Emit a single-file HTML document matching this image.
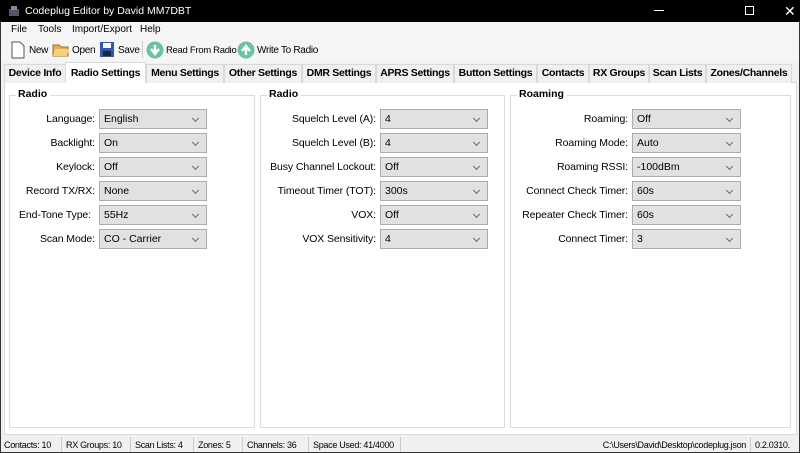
<!DOCTYPE html>
<html><head><meta charset="utf-8"><style>
*{box-sizing:border-box;margin:0;padding:0}
body{width:800px;height:453px;overflow:hidden;background:#f0f0f0;font-family:"Liberation Sans",sans-serif;font-size:10.5px;color:#000;position:relative}
.a{position:absolute;white-space:nowrap}
.tb{position:absolute;top:0;left:0;width:800px;height:22px;background:#000;color:#fff}
.tab{position:absolute;top:64px;height:19px;border:1px solid #d9d9d9;border-bottom:none;background:#f0f0f0;font-weight:bold;font-size:10.5px;letter-spacing:-0.3px;text-align:center;line-height:17px;white-space:nowrap;overflow:hidden}
.grp{position:absolute;top:95px;height:333px;border:1px solid #dcdcdc}
.gt{position:absolute;top:-8px;left:6px;background:#fff;padding:0 3px 0 2px;font-weight:bold;font-size:10.5px}
.cb{position:absolute;height:20px;background:#e1e1e1;border:1px solid #adadad;padding-left:4px;line-height:18px;white-space:nowrap}
.cb:after{content:"";position:absolute;right:8px;top:6px;width:4px;height:4px;border-right:1px solid #666;border-bottom:1px solid #666;transform:rotate(45deg)}
.lb{position:absolute;text-align:right;line-height:20px;white-space:nowrap;letter-spacing:-0.1px}
.sb{position:absolute;top:437px;height:16px;line-height:16px;font-size:9px;letter-spacing:-0.3px;border-right:1px solid #ccc;padding:0 4px;white-space:nowrap;overflow:hidden}
.tt{position:absolute;top:45px;font-size:10px;letter-spacing:-0.3px;white-space:nowrap}
</style></head><body>
<div class="tb">
<svg class="a" style="left:7px;top:4px" width="14" height="14"><rect x="2" y="5" width="10" height="7" fill="#556"/><rect x="4" y="2" width="6" height="4" fill="#889"/></svg>
<div class="a" style="left:25px;top:5px;font-size:10.5px">Codeplug Editor by David MM7DBT</div>
<div class="a" style="left:654px;top:10px;width:10px;height:1px;background:#fff"></div>
<div class="a" style="left:745px;top:6px;width:9px;height:9px;border:1px solid #fff"></div>
<div class="a" style="left:784px;top:3px;font-size:14px">✕</div>
</div>
<div class="a" style="left:0;top:22px;width:800px;height:14px;background:#f5f5f5"></div>
<div class="a" style="left:11px;top:24px;font-size:10px">File</div>
<div class="a" style="left:38px;top:24px;font-size:10px">Tools</div>
<div class="a" style="left:72px;top:24px;font-size:10px">Import/Export</div>
<div class="a" style="left:140px;top:24px;font-size:10px">Help</div>
<div class="a" style="left:0;top:36px;width:800px;height:27px;background:#f5f5f5"></div>
<svg class="a" style="left:10px;top:41px" width="16" height="18"><path d="M2 1h8l4 4v12H2z" fill="#fff" stroke="#555"/></svg>
<div class="tt" style="left:29px">New</div>
<svg class="a" style="left:52px;top:40px" width="18" height="18"><path d="M1 5h6l2 2h7v9H1z" fill="#e3b04b" stroke="#a07020"/><path d="M3 9h14l-2 7H1z" fill="#f3d27a"/></svg>
<div class="tt" style="left:72px">Open</div>
<svg class="a" style="left:99px;top:41px" width="16" height="17"><rect x="1" y="1" width="14" height="15" fill="#3355aa"/><rect x="4" y="2" width="8" height="5" fill="#fff"/><rect x="4" y="10" width="8" height="5" fill="#223"/></svg>
<div class="tt" style="left:118px">Save</div>
<div class="a" style="left:142px;top:41px;width:1px;height:17px;background:#ccc"></div>
<svg class="a" style="left:146px;top:41px" width="18" height="18"><circle cx="9" cy="9" r="8.5" fill="#6cc0a8"/><path d="M9 4v7M5 8l4 5 4-5" stroke="#fff" stroke-width="2.4" fill="none"/></svg>
<div class="tt" style="left:166px;font-size:9.5px">Read From Radio</div>
<svg class="a" style="left:237px;top:41px" width="18" height="18"><circle cx="9" cy="9" r="8.5" fill="#6cc0a8"/><path d="M9 14V7M5 10l4-5 4 5" stroke="#fff" stroke-width="2.4" fill="none"/></svg>
<div class="tt" style="left:257px">Write To Radio</div>

<div class="a" style="left:4px;top:82px;width:793px;height:353px;background:#fff;border:1px solid #d9d9d9"></div>
<div class="tab" style="left:4px;width:62px">Device Info</div>
<div class="tab" style="left:65px;top:62px;height:21px;width:81px;background:#fff;line-height:20px">Radio Settings</div>
<div class="tab" style="left:146px;width:78px">Menu Settings</div>
<div class="tab" style="left:224px;width:78px">Other Settings</div>
<div class="tab" style="left:302px;width:74px">DMR Settings</div>
<div class="tab" style="left:376px;width:78px">APRS Settings</div>
<div class="tab" style="left:454px;width:83px">Button Settings</div>
<div class="tab" style="left:537px;width:52px">Contacts</div>
<div class="tab" style="left:589px;width:60px">RX Groups</div>
<div class="tab" style="left:649px;width:57px">Scan Lists</div>
<div class="tab" style="left:706px;width:86px">Zones/Channels</div>

<div class="grp" style="left:9px;width:246px"><div class="gt">Radio</div></div>
<div class="grp" style="left:260px;width:245px"><div class="gt">Radio</div></div>
<div class="grp" style="left:510px;width:281px"><div class="gt">Roaming</div></div>

<div class="lb" style="left:10px;width:85px;top:109px">Language:</div><div class="cb" style="left:99px;width:108px;top:109px">English</div>
<div class="lb" style="left:10px;width:85px;top:133px">Backlight:</div><div class="cb" style="left:99px;width:108px;top:133px">On</div>
<div class="lb" style="left:10px;width:85px;top:157px">Keylock:</div><div class="cb" style="left:99px;width:108px;top:157px">Off</div>
<div class="lb" style="left:10px;width:85px;top:181px">Record TX/RX:</div><div class="cb" style="left:99px;width:108px;top:181px">None</div>
<div class="lb" style="left:10px;width:81px;top:205px">End-Tone Type:</div><div class="cb" style="left:99px;width:108px;top:205px">55Hz</div>
<div class="lb" style="left:10px;width:85px;top:229px">Scan Mode:</div><div class="cb" style="left:99px;width:108px;top:229px">CO - Carrier</div>

<div class="lb" style="left:262px;width:114px;top:109px">Squelch Level (A):</div><div class="cb" style="left:380px;width:108px;top:109px">4</div>
<div class="lb" style="left:262px;width:114px;top:133px">Squelch Level (B):</div><div class="cb" style="left:380px;width:108px;top:133px">4</div>
<div class="lb" style="left:262px;width:114px;top:157px">Busy Channel Lockout:</div><div class="cb" style="left:380px;width:108px;top:157px">Off</div>
<div class="lb" style="left:262px;width:114px;top:181px">Timeout Timer (TOT):</div><div class="cb" style="left:380px;width:108px;top:181px">300s</div>
<div class="lb" style="left:262px;width:114px;top:205px">VOX:</div><div class="cb" style="left:380px;width:108px;top:205px">Off</div>
<div class="lb" style="left:262px;width:114px;top:229px">VOX Sensitivity:</div><div class="cb" style="left:380px;width:108px;top:229px">4</div>

<div class="lb" style="left:512px;width:116px;top:109px">Roaming:</div><div class="cb" style="left:632px;width:109px;top:109px">Off</div>
<div class="lb" style="left:512px;width:116px;top:133px">Roaming Mode:</div><div class="cb" style="left:632px;width:109px;top:133px">Auto</div>
<div class="lb" style="left:512px;width:116px;top:157px">Roaming RSSI:</div><div class="cb" style="left:632px;width:109px;top:157px">-100dBm</div>
<div class="lb" style="left:512px;width:116px;top:181px">Connect Check Timer:</div><div class="cb" style="left:632px;width:109px;top:181px">60s</div>
<div class="lb" style="left:512px;width:116px;top:205px">Repeater Check Timer:</div><div class="cb" style="left:632px;width:109px;top:205px">60s</div>
<div class="lb" style="left:512px;width:116px;top:229px">Connect Timer:</div><div class="cb" style="left:632px;width:109px;top:229px">3</div>

<div class="sb" style="left:0;width:62px">Contacts: 10</div>
<div class="sb" style="left:62px;width:69px">RX Groups: 10</div>
<div class="sb" style="left:131px;width:63px">Scan Lists: 4</div>
<div class="sb" style="left:194px;width:49px">Zones: 5</div>
<div class="sb" style="left:243px;width:66px">Channels: 36</div>
<div class="sb" style="left:309px;width:92px">Space Used: 41/4000</div>
<div class="sb" style="left:571px;width:180px;text-align:right">C:\Users\David\Desktop\codeplug.json</div>
<div class="sb" style="left:751px;width:48px;border-right:none">0.2.0310.</div>
<div class="a" style="left:0;top:22px;width:1px;height:431px;background:#333"></div>
<div class="a" style="left:799px;top:22px;width:1px;height:431px;background:#333"></div>
<div class="a" style="left:0;top:452px;width:800px;height:1px;background:#333"></div>
</body></html>
